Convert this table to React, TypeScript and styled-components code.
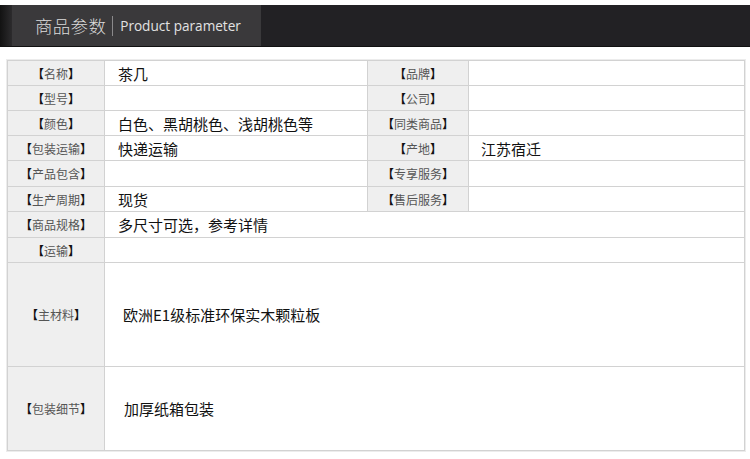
import React from "react";
import styled, { createGlobalStyle } from "styled-components";

const GlobalStyle = createGlobalStyle`
    html, body {
        margin: 0;
        padding: 0;
        background: #ffffff;
    }
    body {
        font-family: "Noto Sans CJK SC", "Noto Sans", sans-serif;
    }
`;

const Page = styled.div`
    width: 750px;
    height: 459px;
    padding-top: 5px;
    box-sizing: border-box;
    overflow: hidden;
    background: #ffffff;
`;

const HeaderBar = styled.div`
    height: 42px;
    display: flex;
    background: linear-gradient(to right, #121212 0, #2c2b2d 12px, #222124 12px);
    border-bottom: 1px solid #111;
    box-sizing: border-box;
`;

const TitleBox = styled.div`
    margin-left: 12px;
    width: 249px;
    background: #3a393b;
    display: flex;
    align-items: center;
    padding-left: 23px;
    box-sizing: border-box;
    color: #dcdcdc;
`;

const TitleCn = styled.span`
    font-family: "Noto Sans CJK SC", sans-serif;
    font-size: 17.5px;
    font-weight: 300;
    letter-spacing: 0.3px;
`;

const Divider = styled.span`
    display: inline-block;
    width: 0;
    height: 20px;
    border-left: 1px solid #8a898b;
    margin: 0 7px 0 6px;
`;

const TitleEn = styled.span`
    font-family: "Open Sans", sans-serif;
    font-size: 13.6px;
    color: #e2e2e2;
`;

const Table = styled.table`
    margin: 13px 0 0 7px;
    width: 737px;
    border-collapse: collapse;
    table-layout: fixed;
    border: 1px solid #cfcfcf;
    box-shadow: 0 0 0 1px #ececec;
`;

const Row = styled.tr<{ $h: number }>`
    height: ${(p) => p.$h}px;
`;

const Label = styled.td`
    background: #efefef;
    border: 1px solid #d2d2d2;
    text-align: center;
    vertical-align: middle;
    font-size: 12px;
    color: #555;
    padding: 0;
    white-space: nowrap;
`;

const Bracket = styled.span`
    color: #111;
    font-weight: 700;
`;

const Value = styled.td<{ $pad?: number }>`
    background: #ffffff;
    border: 1px solid #d2d2d2;
    vertical-align: middle;
    font-size: 15px;
    color: #111;
    padding: 0 0 0 ${(p) => p.$pad ?? 13}px;
    white-space: nowrap;
`;

const LabelText = ({ text }: { text: string }) => (
    <>
        <Bracket>【</Bracket>
        {text}
        <Bracket>】</Bracket>
    </>
);

const pairs = [
    { h: 25, a: "名称", av: "茶几", b: "品牌", bv: "" },
    { h: 25, a: "型号", av: "", b: "公司", bv: "" },
    { h: 25, a: "颜色", av: "白色、黑胡桃色、浅胡桃色等", b: "同类商品", bv: "" },
    { h: 25, a: "包装运输", av: "快递运输", b: "产地", bv: "江苏宿迁" },
    { h: 26, a: "产品包含", av: "", b: "专享服务", bv: "" },
    { h: 25, a: "生产周期", av: "现货", b: "售后服务", bv: "" },
];

const wide = [
    { h: 26, a: "商品规格", v: "多尺寸可选，参考详情", pad: 13 },
    { h: 25, a: "运输", v: "", pad: 13 },
    { h: 104, a: "主材料", v: "欧洲E1级标准环保实木颗粒板", pad: 18 },
    { h: 84, a: "包装细节", v: "加厚纸箱包装", pad: 19 },
];

const App = () => {
    return (
        <Page>
            <GlobalStyle />
            <HeaderBar>
                <TitleBox>
                    <TitleCn>商品参数</TitleCn>
                    <Divider />
                    <TitleEn>Product parameter</TitleEn>
                </TitleBox>
            </HeaderBar>
            <Table>
                <colgroup>
                    <col style={{ width: 97 }} />
                    <col style={{ width: 263 }} />
                    <col style={{ width: 101 }} />
                    <col style={{ width: 276 }} />
                </colgroup>
                <tbody>
                    {pairs.map((r) => (
                        <Row $h={r.h} key={r.a}>
                            <Label>
                                <LabelText text={r.a} />
                            </Label>
                            <Value>{r.av}</Value>
                            <Label>
                                <LabelText text={r.b} />
                            </Label>
                            <Value $pad={12}>{r.bv}</Value>
                        </Row>
                    ))}
                    {wide.map((r) => (
                        <Row $h={r.h} key={r.a}>
                            <Label>
                                <LabelText text={r.a} />
                            </Label>
                            <Value colSpan={3} $pad={r.pad}>
                                {r.v}
                            </Value>
                        </Row>
                    ))}
                </tbody>
            </Table>
        </Page>
    );
};

export default App;
